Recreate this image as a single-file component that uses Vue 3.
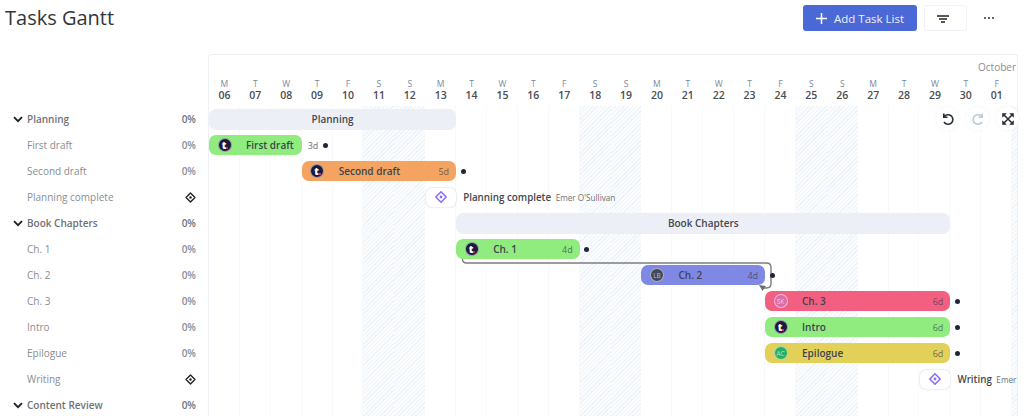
<template>
  <div class="page">
    <header class="top">
      <h1>Tasks Gantt</h1>
      <div class="actions">
        <button class="add-btn" type="button">
          <svg width="11" height="11" viewBox="0 0 11 11"><path d="M5.500 0v11M0 5.500h11" stroke="#fff" stroke-width="1.500" /></svg>
          Add Task List
        </button>
        <button class="filter-btn" type="button">
          <svg width="12" height="8" viewBox="0 0 12 8"><path d="M0 1h12M2 4h8M4 7h4" stroke="#222" stroke-width="1.500" /></svg>
        </button>
        <button class="more-btn" type="button">
          <i></i><i></i><i></i>
        </button>
      </div>
    </header>

    <div class="body">
      <aside class="list">
        <div v-for="row in rows" :key="row.name" class="list-row" :class="{ group: row.group }">
          <svg v-if="row.group" class="chev" width="10" height="7" viewBox="0 0 10 7"><path d="M1 1.200l4 4 4-4" fill="none" stroke="#1c1c28" stroke-width="1.800" /></svg>
          <span class="name">{{ row.name }}</span>
          <svg v-if="row.milestone" width="11" height="11" viewBox="0 0 11 11">
            <path d="M5.500 1L10 5.500 5.500 10 1 5.500z" fill="none" stroke="#222" stroke-width="1.400" stroke-linejoin="round" />
            <circle cx="5.500" cy="5.500" r="1.200" fill="#222" />
          </svg>
          <span v-else class="pct">0%</span>
        </div>
      </aside>

      <section class="chart">
        <div class="month">October</div>
        <div class="days">
          <div v-for="d in days" :key="d.n" class="day">
            <span class="dow">{{ d.w }}</span>
            <span class="num">{{ d.n }}</span>
          </div>
        </div>

        <div class="timeline">
          <div class="columns">
            <div v-for="(d, i) in days" :key="d.n" class="col" :class="{ weekend: i % 7 === 5 || i % 7 === 6 }"></div>
            <div class="col weekend"></div>
          </div>

          <svg class="link" width="600" height="200" viewBox="0 0 600 200">
            <path d="M253.500 150v3q0 4 4 4h300q4.500 0 4.500 4.500v16q0 4.500-4.500 4.500h-4" fill="none" stroke="#7d7d7d" stroke-width="1.400" />
            <path d="M550 179l7 1-3.500 5z" fill="#6f6f6f" />
          </svg>

          <div class="bars">
            <template v-for="(row, i) in rows" :key="row.name">
              <div v-if="row.group && row.span" class="summary" :style="place(i, row.start, row.span)">{{ row.name }}</div>

              <template v-else-if="row.milestone">
                <div class="ms-box" :style="place(i, row.start, 1)">
                  <svg width="14" height="14" viewBox="0 0 14 14">
                    <path d="M7 1.800L12.200 7 7 12.200 1.800 7z" fill="none" stroke="#8b6cf6" stroke-width="1.600" stroke-linejoin="round" />
                    <circle cx="7" cy="7" r="1.400" fill="#8b6cf6" />
                  </svg>
                </div>
                <div class="ms-label" :style="place(i, row.start + 1, 3)">
                  <b>{{ row.name }}</b><span>{{ row.owner }}</span>
                </div>
              </template>

              <template v-else-if="row.span">
                <div class="bar" :style="[place(i, row.start, row.span), { background: row.color }]">
                  <span class="avatar" :style="{ background: row.avatarBg }">
                    <template v-if="row.initials">{{ row.initials }}</template>
                    <template v-else><em>t</em><i></i></template>
                  </span>
                  <span class="bar-name">{{ row.name }}</span>
                  <span v-if="row.inside !== false" class="dur">{{ row.span }}d</span>
                </div>
                <div class="after" :style="place(i, row.start + row.span, 3)">
                  <span v-if="row.inside === false" class="dur">{{ row.span }}d</span>
                  <i class="dot"></i>
                </div>
              </template>
            </template>
          </div>
        </div>

        <div class="tools">
          <button type="button">
            <svg width="14" height="14" viewBox="0 0 14 14"><path d="M2.800 1.500v3.700h3.700M3 5A4.800 4.800 0 1 1 3 10" fill="none" stroke="#2a2f3a" stroke-width="1.600" /></svg>
          </button>
          <button type="button">
            <svg width="14" height="14" viewBox="0 0 14 14"><path d="M11.200 1.500v3.700H7.500M11 5A4.800 4.800 0 1 0 11 10" fill="none" stroke="#b9c9dc" stroke-width="1.600" /></svg>
          </button>
          <button type="button">
            <svg width="14" height="14" viewBox="0 0 14 14"><path d="M3 3l8 8M11 3l-8 8" stroke="#2a2f3a" stroke-width="1.600" /><path d="M1.500 5.200V1.500h3.700zM12.500 5.200V1.500H8.800zM12.500 8.800v3.700H8.800zM1.500 8.800v3.700h3.700z" fill="#2a2f3a" stroke="#2a2f3a" stroke-width=".6" /></svg>
          </button>
        </div>
      </section>
    </div>
  </div>
</template>

<script setup>
const week = ['M', 'T', 'W', 'T', 'F', 'S', 'S']
const nums = ['06', '07', '08', '09', '10', '11', '12', '13', '14', '15', '16', '17', '18', '19', '20', '21', '22', '23', '24', '25', '26', '27', '28', '29', '30', '01']
const days = nums.map((n, i) => ({ n, w: week[i % 7] }))

const dark = '#1b1a3a'
const green = '#90ec7e'

const rows = [
  { name: 'Planning', group: true, start: 0, span: 8 },
  { name: 'First draft', start: 0, span: 3, color: green, avatarBg: dark, inside: false },
  { name: 'Second draft', start: 3, span: 5, color: '#f4a460', avatarBg: dark },
  { name: 'Planning complete', milestone: true, start: 7, owner: "Emer O'Sullivan" },
  { name: 'Book Chapters', group: true, start: 8, span: 16 },
  { name: 'Ch. 1', start: 8, span: 4, color: green, avatarBg: dark },
  { name: 'Ch. 2', start: 14, span: 4, color: '#8088e6', avatarBg: '#3d4a5c', initials: 'LB' },
  { name: 'Ch. 3', start: 18, span: 6, color: '#f25f80', avatarBg: '#dd6ba8', initials: 'SK' },
  { name: 'Intro', start: 18, span: 6, color: green, avatarBg: dark },
  { name: 'Epilogue', start: 18, span: 6, color: '#e3d058', avatarBg: '#27ae60', initials: 'AC' },
  { name: 'Writing', milestone: true, start: 23, owner: 'Emer' },
  { name: 'Content Review', group: true }
]

const place = (row, start, span) => ({
  gridRow: row + 1,
  gridColumn: `${start + 1} / span ${span}`
})
</script>

<style scoped>
.page {
  width: 1024px;
  height: 416px;
  overflow: hidden;
  font-family: "Open Sans", sans-serif;
  color: #3c3f46;
  background: #fff;
}

.top {
  display: flex;
  justify-content: space-between;
  align-items: center;
  height: 36px;
  padding: 0 13px 0 5px;
  margin-bottom: 18px;
}

h1 {
  margin: 0;
  font-size: 20px;
  font-weight: 500;
  color: #33363b;
  line-height: 36px;
}

.actions {
  display: flex;
  align-items: center;
}

.add-btn {
  display: flex;
  align-items: center;
  justify-content: center;
  gap: 7px;
  width: 114px;
  height: 26px;
  margin-right: 7px;
  border: 0;
  border-radius: 3px;
  background: #4a68d6;
  color: #eef1fb;
  font: 500 11.500px "Open Sans", sans-serif;
}

.filter-btn {
  width: 43px;
  height: 26px;
  padding: 0 6px 0 0;
  border: 1px solid #f0f2f7;
  border-radius: 3px;
  background: #fff;
}

.more-btn {
  display: flex;
  gap: 1.500px;
  justify-content: center;
  width: 44px;
  padding: 0;
  border: 0;
  background: none;
}

.more-btn i {
  width: 2.500px;
  height: 2.500px;
  border-radius: 50%;
  background: #333;
}

.body {
  display: flex;
}

.list {
  flex: none;
  width: 208px;
  padding-top: 52px;
}

.list-row {
  position: relative;
  display: flex;
  align-items: center;
  height: 26px;
  padding: 0 12px 0 27px;
  font-size: 10px;
  color: #8a8d92;
}

.list-row.group {
  font-weight: 600;
  color: #6f7277;
}

.chev {
  position: absolute;
  left: 13px;
  top: 10px;
}

.name {
  flex: 1;
}

.pct {
  font-size: 10px;
  font-weight: 600;
  color: #8a8d92;
}

.group .pct {
  color: #6f7277;
}

.chart {
  position: relative;
  flex: none;
  width: 810px;
  height: 362px;
  box-sizing: border-box;
  border: 1px solid #eef0f5;
  border-bottom: 0;
  border-radius: 4px 4px 0 0;
}

.month {
  height: 23px;
  padding-right: 1px;
  text-align: right;
  font-size: 10px;
  line-height: 25px;
  color: #8a8d92;
}

.days {
  display: grid;
  grid-template-columns: repeat(26, 30.900px);
  height: 28px;
}

.day {
  display: flex;
  flex-direction: column;
  align-items: center;
}

.dow {
  font-size: 8.500px;
  line-height: 11px;
  color: #7b88a0;
}

.num {
  font-size: 10.500px;
  font-weight: 600;
  line-height: 13px;
  color: #4a4d52;
}

.timeline {
  position: relative;
  height: 310px;
  overflow: hidden;
}

.columns {
  position: absolute;
  inset: 0;
  display: grid;
  grid-template-columns: repeat(27, 30.900px);
}

.col {
  border-right: 1px solid #f8f9fb;
}

.col.weekend {
  border-right: 0;
  background: repeating-linear-gradient(135deg, #eef2f9 0 1px, #fbfcfe 1px 3px);
}

.link {
  position: absolute;
  left: 0;
  top: 0;
}

.bars {
  position: relative;
  display: grid;
  grid-template-columns: repeat(27, 30.900px);
  grid-auto-rows: 26px;
  align-items: center;
}

.summary {
  height: 21px;
  border-radius: 7px;
  background: #eceff6;
  font-size: 10px;
  font-weight: 600;
  line-height: 21px;
  text-align: center;
  color: #45484e;
}

.bar {
  display: flex;
  align-items: center;
  height: 20px;
  padding: 0 7px 0 8.500px;
  border-radius: 7px;
  white-space: nowrap;
  font-size: 10px;
  font-weight: 600;
  color: #3d4450;
}

.avatar {
  position: relative;
  flex: none;
  display: flex;
  align-items: center;
  justify-content: center;
  box-sizing: border-box;
  width: 14px;
  height: 14px;
  border: 1px solid rgba(255, 255, 255, 0.55);
  border-radius: 50%;
  font-size: 6.500px;
  font-weight: 400;
  color: rgba(255, 255, 255, 0.65);
}

.avatar em {
  margin-left: -1px;
  font-style: normal;
  font-size: 10px;
  font-weight: 800;
  line-height: 12px;
  color: #fff;
}

.avatar i {
  position: absolute;
  left: 7px;
  top: 7.500px;
  width: 2.500px;
  height: 2.500px;
  border-radius: 50%;
  background: #f0308c;
}

.bar-name {
  flex: 1;
  margin-left: 14.500px;
}

.dur {
  font-size: 9px;
  font-weight: 400;
  color: rgba(50, 56, 70, 0.7);
}

.after {
  display: flex;
  align-items: center;
  gap: 5px;
  padding-left: 4.500px;
}

.after .dur {
  margin-left: 1.500px;
  color: #6f7277;
}

.dot {
  width: 5px;
  height: 5px;
  border-radius: 50%;
  background: #20263a;
}

.ms-box {
  display: flex;
  align-items: center;
  justify-content: center;
  height: 19px;
  margin-left: 1px;
  border-radius: 6px;
  background: #fff;
  box-shadow: 0 0 2px rgba(120, 130, 170, 0.45);
}

.ms-label {
  display: flex;
  align-items: center;
  gap: 4.500px;
  padding-left: 7px;
  white-space: nowrap;
  font-size: 9.800px;
}

.ms-label b {
  font-weight: 600;
  color: #45484e;
}

.ms-label span {
  font-size: 8.200px;
  color: #6f7277;
}

.tools {
  position: absolute;
  top: 52px;
  right: -2px;
  display: flex;
  gap: 7px;
}

.tools button {
  display: flex;
  align-items: center;
  justify-content: center;
  width: 23px;
  height: 23px;
  padding: 0;
  border: 0;
  border-radius: 50%;
  background: #fff;
  box-shadow: 0 0 3px rgba(200, 208, 225, 0.25);
}
</style>

<style>
html, body {
  margin: 0;
  background: #fff;
}
</style>
